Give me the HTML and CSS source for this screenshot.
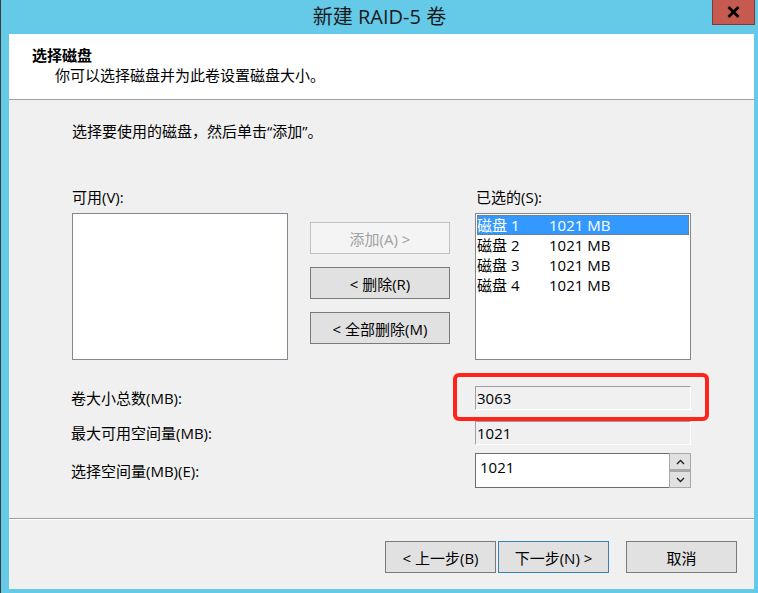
FILE: index.html
```html
<!DOCTYPE html>
<html lang="zh-CN">
<head>
    <meta charset="UTF-8">
    <title>新建 RAID-5 卷</title>
    <link rel="stylesheet" href="styles.css">
</head>
<body>
    <div class="window">
        <div class="titlebar">
            <div class="title">新建 RAID-5 卷</div>
            <div class="close">
                <svg width="13" height="12" viewBox="0 0 13 12">
                    <path d="M1.5 1 L11.5 11 M11.5 1 L1.5 11" stroke="#000" stroke-width="2.8" fill="none"/>
                </svg>
            </div>
        </div>

        <div class="client">
            <div class="header">
                <h1>选择磁盘</h1>
                <p>你可以选择磁盘并为此卷设置磁盘大小。</p>
            </div>

            <div class="content">
                <p class="intro">选择要使用的磁盘，然后单击“添加”。</p>

                <div class="picker">
                    <div class="label">可用(V):</div>
                    <div></div>
                    <div class="label selected-label">已选的(S):</div>

                    <div class="listbox"></div>
                    <div class="actions">
                        <button class="btn" disabled>添加(A) &gt;</button>
                        <button class="btn">&lt; 删除(R)</button>
                        <button class="btn">&lt; 全部删除(M)</button>
                    </div>
                    <div class="listbox">
                        <div class="row active"><span class="disk">磁盘 1</span><span>1021 MB</span></div>
                        <div class="row"><span class="disk">磁盘 2</span><span>1021 MB</span></div>
                        <div class="row"><span class="disk">磁盘 3</span><span>1021 MB</span></div>
                        <div class="row"><span class="disk">磁盘 4</span><span>1021 MB</span></div>
                    </div>
                </div>

                <div class="sizes">
                    <div class="size-row">
                        <div class="size-label">卷大小总数(MB):</div>
                        <div class="readonly">3063</div>
                    </div>
                    <div class="size-row">
                        <div class="size-label">最大可用空间量(MB):</div>
                        <div class="readonly">1021</div>
                    </div>
                    <div class="size-row spin-row">
                        <div class="size-label">选择空间量(MB)(E):</div>
                        <div class="spin">
                            <div class="spin-value">1021</div>
                            <div class="spin-buttons">
                                <div class="spin-btn">
                                    <svg width="9" height="6" viewBox="0 0 9 6"><path d="M1 5 L4.5 1.5 L8 5" stroke="#222" stroke-width="1.4" fill="none"/></svg>
                                </div>
                                <div class="spin-btn">
                                    <svg width="9" height="6" viewBox="0 0 9 6"><path d="M1 1 L4.5 4.5 L8 1" stroke="#222" stroke-width="1.4" fill="none"/></svg>
                                </div>
                            </div>
                        </div>
                    </div>
                </div>

                <!-- red annotation around the total -->
                <div class="mark"></div>
            </div>

            <div class="footer">
                <button class="btn wide">&lt; 上一步(B)</button>
                <button class="btn wide default">下一步(N) &gt;</button>
                <button class="btn wide cancel">取消</button>
            </div>
        </div>
    </div>
</body>
</html>
```

FILE: styles.css
```css
* {
    box-sizing: border-box;
}

body {
    margin: 0;
    font-family: "Open Sans", "Noto Sans CJK SC", sans-serif;
    font-size: 15px;
    line-height: 20px;
    color: #000;
}

.window {
    width: 758px;
    height: 593px;
    background-color: #65c9e8;
    border-left: 1px solid #3a3a3a;
    display: flex;
    flex-direction: column;
}

/* Title bar */
.titlebar {
    height: 34px;
    display: grid;
    grid-template-columns: 1fr auto 1fr;
    align-items: start;
}

.title {
    grid-column: 2;
    font-size: 20px;
    line-height: 34px;
    color: #1a1a1a;
}

.close {
    grid-column: 3;
    justify-self: end;
    width: 43px;
    height: 25px;
    margin-right: 3px;
    background-color: #c75a50;
    border: 1px solid #7e3a36;
    border-top: none;
    display: flex;
    align-items: center;
    justify-content: center;
}

/* Client area */
.client {
    flex: 1;
    margin: 0 4px 4px 8px;
    background-color: #f0f0f0;
    display: flex;
    flex-direction: column;
}

.header {
    height: 66px;
    background-color: #fff;
    border-bottom: 1px solid #a0a0a0;
    padding: 11px 0 0 23px;
}

.header h1 {
    margin: 0;
    font-size: 15px;
    line-height: 20px;
    font-weight: bold;
}

.header p {
    margin: 0 0 0 23px;
}

.content {
    flex: 1;
    position: relative;
    padding: 21px 0 0 63px;
}

.intro {
    margin: 0;
}

/* Disk picker */
.picker {
    margin-top: 46px;
    display: grid;
    grid-template-columns: 216px 187px 216px;
    grid-template-rows: 20px 147px;
    row-gap: 6px;
}

.selected-label {
    padding-left: 1px;
}

.listbox {
    background-color: #fff;
    border: 1px solid #828790;
    padding: 1px;
}

.row {
    height: 20px;
    display: flex;
    white-space: nowrap;
}

.row .disk {
    width: 72px;
}

.row.active {
    background-color: #3399ff;
    color: #fff;
    outline: 1px dotted #9a6a3a;
    outline-offset: -1px;
}

.actions {
    padding: 9px 0 0 22px;
    display: flex;
    flex-direction: column;
    gap: 13px;
}

.btn {
    width: 140px;
    height: 32px;
    padding: 0;
    font-family: inherit;
    font-size: 15px;
    color: #000;
    background-color: #e1e1e1;
    border: 1px solid #7a7a7a;
}

.btn:disabled {
    color: #a0a0a0;
    background-color: #f4f4f4;
    border-color: #bfbfbf;
}

/* Size fields */
.sizes {
    margin: 26px 0 0 -1px;
}

.size-row {
    display: flex;
    align-items: center;
    height: 24px;
}

.size-row + .size-row {
    margin-top: 11px;
}

.size-row.spin-row {
    margin-top: 8px;
    height: 35px;
}

.size-label {
    width: 404px;
}

.readonly {
    width: 216px;
    height: 24px;
    padding-left: 1px;
    line-height: 22px;
    border: 1px solid;
    border-color: #a0a0a0 #fff #fff #a0a0a0;
}

.spin {
    width: 216px;
    height: 35px;
    display: flex;
    background-color: #fff;
    border: 1px solid #6d6d6d;
    border-right: none;
}

.spin-value {
    flex: 1;
    padding: 3px 0 0 4px;
}

.spin-buttons {
    width: 22px;
    display: flex;
    flex-direction: column;
    margin-top: -1px;
    margin-bottom: -1px;
}

.spin-btn {
    flex: 1;
    background-color: #e1e1e1;
    border: 1px solid #a8a8a8;
    display: flex;
    align-items: center;
    justify-content: center;
}

.spin-btn + .spin-btn {
    border-top-width: 2px;
}

.mark {
    position: absolute;
    left: 444px;
    top: 273px;
    width: 256px;
    height: 48px;
    border: 4px solid #ff2419;
    border-radius: 6px;
}

/* Footer */
.footer {
    height: 71px;
    border-top: 1px solid #a0a0a0;
    box-shadow: inset 0 1px 0 #fff;
    padding: 22px 17px 0 0;
    display: flex;
    justify-content: flex-end;
    align-items: flex-start;
    gap: 2px;
}

.btn.wide {
    width: 111px;
}

.btn.default {
    border-color: #3c7fb1;
}

.btn.cancel {
    margin-left: 15px;
}
```
